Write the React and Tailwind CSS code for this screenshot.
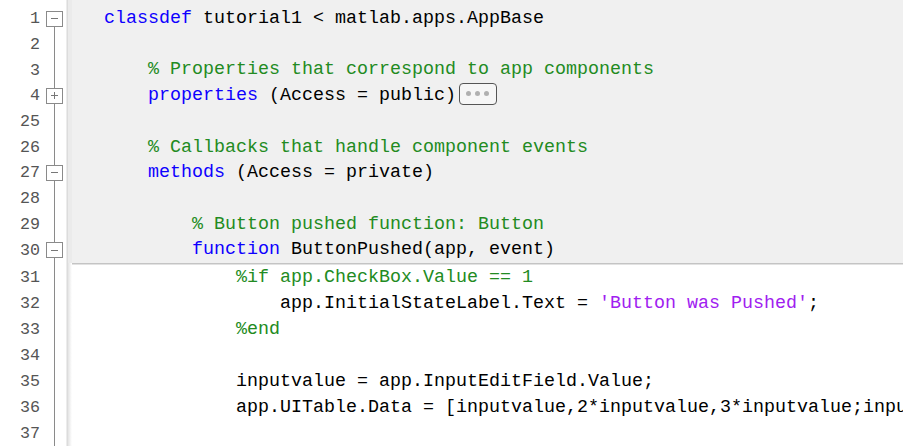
import React from 'react';

const K = ({ children }) => <span className="text-[#0e00ff]">{children}</span>;
const C = ({ children }) => <span className="text-[#228b22]">{children}</span>;
const S = ({ children }) => <span className="text-[#a020f0]">{children}</span>;

const pad = (n) => ' '.repeat(n);

const Ellipsis = () => (
  <span className="inline-flex items-center justify-center align-middle ml-[3px] w-[38px] h-[22px] border border-[#555] rounded-[4px] bg-[#f6f6f6] gap-[4px] -mt-[3px]">
    <span className="w-[5px] h-[5px] rounded-full bg-[#b0b0b0]" />
    <span className="w-[5px] h-[5px] rounded-full bg-[#b0b0b0]" />
    <span className="w-[5px] h-[5px] rounded-full bg-[#b0b0b0]" />
  </span>
);

const topLines = [
  { n: 1, fold: 'minus', first: true, code: <><K>classdef</K> tutorial1 &lt; matlab.apps.AppBase</> },
  { n: 2, code: null },
  { n: 3, code: <>{pad(4)}<C>% Properties that correspond to app components</C></> },
  { n: 4, fold: 'plus', code: <>{pad(4)}<K>properties</K> (Access = public)<Ellipsis /></> },
  { n: 25, code: null },
  { n: 26, code: <>{pad(4)}<C>% Callbacks that handle component events</C></> },
  { n: 27, fold: 'minus', code: <>{pad(4)}<K>methods</K> (Access = private)</> },
  { n: 28, code: null },
  { n: 29, code: <>{pad(8)}<C>% Button pushed function: Button</C></> },
  { n: 30, fold: 'minus', code: <>{pad(8)}<K>function</K> ButtonPushed(app, event)</> },
];

const bottomLines = [
  { n: 31, code: <>{pad(12)}<C>%if app.CheckBox.Value == 1</C></> },
  { n: 32, code: <>{pad(16)}app.InitialStateLabel.Text = <S>'Button was Pushed'</S>;</> },
  { n: 33, code: <>{pad(12)}<C>%end</C></> },
  { n: 34, code: null },
  { n: 35, code: <>{pad(12)}inputvalue = app.InputEditField.Value;</> },
  { n: 36, code: <>{pad(12)}app.UITable.Data = [inputvalue,2*inputvalue,3*inputvalue;inputvalue,2*inputvalue];</> },
  { n: 37, code: null },
];

const FoldCell = ({ fold, first }) => {
  if (!fold) {
    return (
      <div className="w-[17px] h-full flex justify-center">
        <div className="w-px h-full bg-[#8a8a8a]" />
      </div>
    );
  }
  return (
    <div className="w-[17px] h-full flex flex-col items-center">
      <div className={`w-px flex-1 ${first ? 'bg-transparent' : 'bg-[#8a8a8a]'}`} />
      <div className="w-[17px] h-[16px] border border-[#8a8a8a] bg-white flex items-center justify-center">
        {fold === 'minus' ? (
          <span className="block w-[7px] h-px bg-[#777]" />
        ) : (
          <span className="relative block w-[9px] h-[9px]">
            <span className="absolute left-[1px] top-[4px] block w-[7px] h-px bg-[#777]" />
            <span className="absolute left-[4px] top-[1px] block w-px h-[7px] bg-[#777]" />
          </span>
        )}
      </div>
      <div className="w-px flex-1 bg-[#8a8a8a]" />
    </div>
  );
};

const Gutter = ({ n, fold, first }) => (
  <div className="w-[66px] h-full flex items-center bg-white shrink-0">
    <div
      className="w-[42px] text-right pr-[2px] text-[#555] text-[16.7px]"
      style={{ fontFamily: '"Liberation Mono", "DejaVu Sans Mono", monospace' }}
    >
      {n}
    </div>
    <div className="ml-[4px] h-full">
      <FoldCell fold={fold} first={first} />
    </div>
  </div>
);

const Shade = ({ white }) => (
  <div className="flex h-full shrink-0">
    <div className="w-px h-full bg-[#ececec]" />
    <div className="w-px h-full bg-[#dcdcdc]" />
    <div className={`w-[4px] h-full ${white ? 'bg-gradient-to-r from-[#e4e4e4] to-white' : 'bg-[#ebebeb]'}`} />
  </div>
);

const Row = ({ line, white, h }) => (
  <div className={`flex ${h}`}>
    <Gutter n={line.n} fold={line.fold} first={line.first} />
    <Shade white={white} />
    <div
      className={`flex-1 flex items-center pl-[32px] overflow-hidden text-black text-[18.33px] ${white ? 'bg-white' : 'bg-[#f0f0f0]'}`}
      style={{ fontFamily: '"Liberation Mono", "DejaVu Sans Mono", monospace' }}
    >
      <div className="whitespace-pre">{line.code}</div>
    </div>
  </div>
);

export default function App() {
  return (
    <div className="w-[903px] h-[446px] overflow-hidden bg-white">
      <div className="flex h-[6px]">
        <div className="w-[66px] bg-white shrink-0" />
        <Shade />
        <div className="flex-1 bg-[#f0f0f0]" />
      </div>
      {topLines.map((l) => (
        <Row key={l.n} line={l} h="h-[25.7px]" />
      ))}
      <div className="flex h-[2px]">
        <div className="w-[66px] bg-white shrink-0 flex">
          <div className="w-[46px]" />
          <div className="w-[17px] flex justify-center">
            <div className="w-px h-full bg-[#8a8a8a]" />
          </div>
        </div>
        <Shade white />
        <div className="flex-1 border-t border-[#c4c4c4] border-b border-b-[#e2e2e2]" />
      </div>
      {bottomLines.map((l) => (
        <Row key={l.n} line={l} white h="h-[25.9px]" />
      ))}
    </div>
  );
}
